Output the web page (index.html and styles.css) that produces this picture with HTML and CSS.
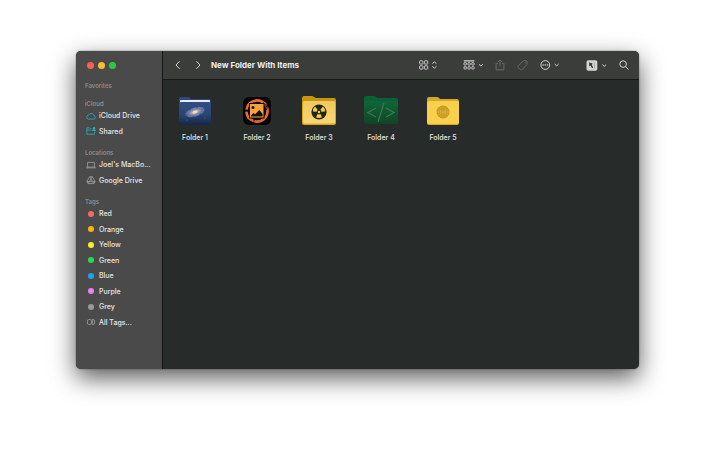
FILE: index.html
```
<!DOCTYPE html>
<html lang="en">
<head>
    <meta charset="UTF-8">
    <meta name="viewport" content="width=device-width, initial-scale=1.0">
    <title>New Folder With Items</title>
    <link rel="stylesheet" href="styles.css">
</head>
<body>
    <div class="window">
        <nav class="sidebar">
            <div class="lights">
                <button class="light close" aria-label="Close"></button>
                <button class="light minimise" aria-label="Minimise"></button>
                <button class="light zoom" aria-label="Zoom"></button>
            </div>

            <section class="section">
                <h2>Favorites</h2>
            </section>

            <section class="section">
                <h2>iCloud</h2>
                <ul class="places">
                    <li><a href="#">
                        <svg class="icon cyan" viewBox="0 0 10 10"><path d="M2.8 8.2h4.8a1.9 1.9 0 0 0 .3-3.7A2.7 2.7 0 0 0 2.8 4a2.1 2.1 0 0 0 0 4.2z"/></svg>
                        <span>iCloud Drive</span>
                    </a></li>
                    <li><a href="#">
                        <svg class="icon cyan" viewBox="0 0 10 10"><path d="M5.2 2.6H4.4L3.6 1.8H.9v6.5h7.5V5.6M.9 4h4.5"/><circle class="fill" cx="8" cy="2.2" r="1.2"/><path class="fill" d="M6.1 5.1c0-2 3.8-2 3.8 0z"/></svg>
                        <span>Shared</span>
                    </a></li>
                </ul>
            </section>

            <section class="section">
                <h2>Locations</h2>
                <ul class="places">
                    <li><a href="#">
                        <svg class="icon" viewBox="0 0 10 10"><path d="M1.6 7V2.4h6.8V7M.2 7.9h9.6M.6 7.1h8.8"/></svg>
                        <span>Joel's MacBo...</span>
                    </a></li>
                    <li><a href="#">
                        <svg class="icon" viewBox="0 0 10 10"><path d="M3.7 1.7h2.6l2.9 4.8-1.3 2.1H2.1L.8 6.5z"/><path d="M5 4 3.4 6.6h3.2zM3.7 1.7l1.3 2.3M.8 6.5h2.6M7.9 8.6 6.6 6.6M6.3 1.7 5 4M9.2 6.5H6.6M2.1 8.6l1.3-2"/></svg>
                        <span>Google Drive</span>
                    </a></li>
                </ul>
            </section>

            <section class="section">
                <h2>Tags</h2>
                <ul class="places tags">
                    <li><a href="#"><i class="dot red"></i><span>Red</span></a></li>
                    <li><a href="#"><i class="dot orange"></i><span>Orange</span></a></li>
                    <li><a href="#"><i class="dot yellow"></i><span>Yellow</span></a></li>
                    <li><a href="#"><i class="dot green"></i><span>Green</span></a></li>
                    <li><a href="#"><i class="dot blue"></i><span>Blue</span></a></li>
                    <li><a href="#"><i class="dot purple"></i><span>Purple</span></a></li>
                    <li><a href="#"><i class="dot grey"></i><span>Grey</span></a></li>
                    <li><a href="#">
                        <svg class="icon" viewBox="0 0 10 10"><rect x="1.4" y="2.6" width="4.2" height="4.8" rx="1.4"/><path d="M5.8 2.6h1.4q1.4 0 1.4 1.4v2q0 1.4-1.4 1.4H5.8M6.6 3.4v3.2"/></svg>
                        <span>All Tags...</span>
                    </a></li>
                </ul>
            </section>
        </nav>

        <main class="main">
            <header class="toolbar">
                <div class="history">
                    <button aria-label="Back"><svg width="8" height="10" viewBox="0 0 8 10"><path d="M5.6 1.2 2 5l3.6 3.8"/></svg></button>
                    <button aria-label="Forward"><svg width="8" height="10" viewBox="0 0 8 10"><path d="M2.4 1.2 6 5 2.4 8.8"/></svg></button>
                </div>
                <h1>New Folder With Items</h1>

                <div class="tools">
                    <button aria-label="View">
                        <svg width="18" height="10" viewBox="0 0 18 10"><g stroke-width=".9"><rect x=".6" y=".8" width="3.3" height="3.3" rx=".5"/><rect x="5.4" y=".8" width="3.3" height="3.3" rx=".5"/><rect x=".6" y="5.8" width="3.3" height="3.3" rx=".5"/><rect x="5.4" y="5.8" width="3.3" height="3.3" rx=".5"/></g><path d="M13.4 3.6 15.4 1.8l2 1.8M13.4 6.4l2 1.8 2-1.8"/></svg>
                    </button>
                </div>
                <div class="tools">
                    <button aria-label="Group">
                        <svg width="20" height="10" viewBox="0 0 20 10"><path d="M.8 .8h10.6" stroke-width="1.2"/><g stroke-width=".9"><rect x="1" y="2.7" width="2.3" height="2.3" rx=".4"/><rect x="4.9" y="2.7" width="2.3" height="2.3" rx=".4"/><rect x="8.8" y="2.7" width="2.3" height="2.3" rx=".4"/><rect x="1" y="6.7" width="2.3" height="2.3" rx=".4"/><rect x="4.9" y="6.7" width="2.3" height="2.3" rx=".4"/><rect x="8.8" y="6.7" width="2.3" height="2.3" rx=".4"/></g><path d="m16 4.3 1.9 1.8 1.9-1.8"/></svg>
                    </button>
                    <button class="dim" aria-label="Share" disabled>
                        <svg width="10" height="12" viewBox="0 0 10 12"><path d="M3.2 4.4H1.1v6.4h7.8V4.4H6.8M5 7.6V1M3 2.9 5 1l2 1.9"/></svg>
                    </button>
                    <button class="dim" aria-label="Tags" disabled>
                        <svg width="11" height="12" viewBox="0 0 11 12"><path d="m1.1 7.2 5-5.2q.4-.4 1-.4l2.6.2q.5.1.5.6l-.2 2.8q0 .5-.4.9l-4.7 4.6q-.6.5-1.2 0L1.1 8.5q-.5-.6 0-1.3z"/><circle cx="8.1" cy="3.8" r=".3"/></svg>
                    </button>
                    <button aria-label="More">
                        <svg width="20" height="10" viewBox="0 0 20 10"><circle cx="5.3" cy="5" r="4.4"/><g class="fill"><circle cx="3.1" cy="5" r=".8"/><circle cx="5.3" cy="5" r=".8"/><circle cx="7.5" cy="5" r=".8"/></g><path d="m14.8 4.1 1.9 1.8 1.9-1.8"/></svg>
                    </button>
                </div>
                <div class="tools">
                    <button aria-label="Action">
                        <svg width="21" height="11" viewBox="0 0 21 11"><rect class="fill" x=".5" y=".2" width="10.8" height="10.6" rx="1.8"/><path class="dark" d="m3.2 2.3 3.6 1.5-1.1.9 1.5 2.9-1.1.6-1.6-2.8-1.3.9z"/><path class="dark" d="M8.3 2.4h.7v6.2h-.7z" opacity=".35"/><path d="m16.3 4.6 1.9 1.8L20.1 4.6"/></svg>
                    </button>
                    <button aria-label="Search">
                        <svg width="10" height="10" viewBox="0 0 10 10"><circle cx="4.1" cy="4.1" r="3.3"/><path d="m6.5 6.5 3 3"/></svg>
                    </button>
                </div>
            </header>

            <div class="files">
                <figure class="file">
                    <svg width="34" height="32" viewBox="0 0 34 32">
                        <defs>
                            <linearGradient id="sky" x1="0" y1="0" x2="0" y2="1"><stop offset="0" stop-color="#304d7e"/><stop offset=".5" stop-color="#2c4673"/><stop offset="1" stop-color="#172848"/></linearGradient>
                            <radialGradient id="galaxy"><stop offset="0" stop-color="#fff0df"/><stop offset=".25" stop-color="#c5a6a8"/><stop offset=".6" stop-color="#7186b0" stop-opacity=".75"/><stop offset="1" stop-color="#3c5f99" stop-opacity="0"/></radialGradient>
                        </defs>
                        <path fill="#2b4a84" d="M1 4q0-2 2-2h7q1 0 2 1l1 1h18q2 0 2 2v5H1z"/>
                        <rect x="2" y="5" width="30" height="6" rx="1" fill="#e6edf7"/>
                        <rect x="1" y="7" width="32" height="23" rx="1.5" fill="url(#sky)"/>
                        <g transform="rotate(-17 17 17)"><ellipse cx="17" cy="17" rx="12" ry="5.5" fill="url(#galaxy)"/><ellipse cx="17" cy="17" rx="9" ry="3.6" fill="none" stroke="#9bacd0" stroke-width=".7" stroke-dasharray="5 2" opacity=".55"/><ellipse cx="17" cy="17" rx="2.4" ry="1.2" fill="#f5dbc7"/></g>
                        <g fill="#8fa9d3" opacity=".6"><circle cx="6" cy="12" r=".4"/><circle cx="27" cy="23" r=".5"/><circle cx="9" cy="25" r=".5"/><circle cx="30" cy="11" r=".4"/></g>
                    </svg>
                    <figcaption>Folder 1</figcaption>
                </figure>
                <figure class="file">
                    <svg width="34" height="32" viewBox="0 0 34 32">
                        <rect x="3" y="2" width="28" height="28" rx="6" fill="#050404"/>
                        <circle cx="17" cy="16" r="10.6" fill="none" stroke="#ed6a36" stroke-width="2.6" stroke-dasharray="19 1.5 12 2 22 1"/>
                        <path d="M24 7q5 5 3.5 12M11 25q7 4 13-1" fill="none" stroke="#e75f32" stroke-width="1.4"/>
                        <path d="M24.5 10h3l-1 5M24 13l3-2" fill="none" stroke="#050404" stroke-width="1"/>
                        <rect x="9.5" y="8.5" width="14.5" height="14.5" fill="#f4a43b" stroke="#050404"/>
                        <circle cx="13" cy="12.4" r="1.5" fill="#15100a"/>
                        <path d="m11 20.6 2.4-2.6 1.8 1.3 4-4.3 3.3 3.7v2.8H11z" fill="#15100a"/>
                    </svg>
                    <figcaption>Folder 2</figcaption>
                </figure>
                <figure class="file">
                    <svg width="34" height="32" viewBox="0 0 34 32">
                        <defs><linearGradient id="gold" x1="0" y1="0" x2="0" y2="1"><stop offset="0" stop-color="#f0c860"/><stop offset="1" stop-color="#f9d673"/></linearGradient></defs>
                        <path fill="#c5960e" d="M0 3q0-2 2-2h8q1 0 2 1l2 1h18q2 0 2 2v6H0z"/>
                        <rect y="6" width="34" height="24" rx="2" fill="#d9a512"/>
                        <rect x="1" y="6" width="32" height="22.5" rx="1.5" fill="url(#gold)"/>
                        <circle cx="17" cy="17" r="7.6" fill="#242519"/>
                        <g fill="#f5ce3d"><path d="M15.6 14.8 13 11.6A6 6 0 0 0 11 16.4l3.7.4q.1-1.3.9-2z"/><path d="M18.4 14.8l2.6-3.2a6 6 0 0 1 2 4.8l-3.7.4q-.1-1.3-.9-2z"/><path d="M15.6 19q1.4.8 2.8 0l1.6 3.2q-3 1.4-6 0z"/><circle cx="17" cy="17" r="1.2"/></g>
                    </svg>
                    <figcaption>Folder 3</figcaption>
                </figure>
                <figure class="file">
                    <svg width="34" height="32" viewBox="0 0 34 32">
                        <defs><linearGradient id="forest" x1="0" y1="0" x2="0" y2="1"><stop offset="0" stop-color="#10663a"/><stop offset="1" stop-color="#114424"/></linearGradient></defs>
                        <path fill="#0a6234" d="M0 3q0-2 2-2h8q1 0 2 1l2 1h18q2 0 2 2v6H0z"/>
                        <rect y="6" width="34" height="23" rx="2" fill="url(#forest)"/>
                        <path d="m12 13-8 4.5 8 4.5m10-9 8 4.5-8 4.5M20 8l-6 19" fill="none" stroke="#3a7a4e" stroke-width="1.2"/>
                    </svg>
                    <figcaption>Folder 4</figcaption>
                </figure>
                <figure class="file">
                    <svg width="34" height="32" viewBox="0 0 34 32">
                        <path fill="#d5a72a" d="M1 4q0-2 2-2h8q1 0 2 1l1 1h17q2 0 2 2v5H1z"/>
                        <rect x="1" y="6" width="32" height="24" rx="2" fill="#dba92a"/>
                        <rect x="1" y="6" width="32" height="23" rx="2" fill="#f8d04c"/>
                        <circle cx="17" cy="17" r="6.5" fill="#c49a23"/>
                        <path d="M17 11v12M14.7 12v10M19.3 12v10M12.4 15v5M21.6 15v5M11 17h12M12.5 14l9 6M21.5 14l-9 6" stroke="#dfb43a" stroke-width=".6" fill="none"/>
                    </svg>
                    <figcaption>Folder 5</figcaption>
                </figure>
            </div>
        </main>
    </div>
</body>
</html>
```

FILE: styles.css
```
* {
    box-sizing: border-box;
}

body {
    display: flex;
    min-height: 100vh;
    margin: 0;
    padding: 51px 81px 83px 76px;
    background-color: #fff;
    font-family: Inter, "Liberation Sans", sans-serif;
    font-size: 7px;
    color: #e6e6e6;
}

h1, h2, ul, figure {
    margin: 0;
    padding: 0;
}

button {
    display: flex;
    padding: 0;
    border: none;
    background: none;
    color: inherit;
}

svg {
    display: block;
    flex: none;
    fill: none;
    stroke: currentColor;
}

.fill {
    fill: currentColor;
    stroke: none;
}

.window {
    display: flex;
    flex: 1;
    border-radius: 5px;
    overflow: hidden;
    background-color: #272b2a;
    box-shadow: 0 9px 24px rgba(0, 0, 0, 0.65), 0 0 2px rgba(0, 0, 0, 0.4);
}

/* Sidebar */
.sidebar {
    display: flex;
    flex-direction: column;
    gap: 10px;
    width: 87px;
    padding: 11px 9px;
    border-right: 1px solid #151716;
    background-color: #4a4a4a;
}

.lights {
    display: flex;
    gap: 4px;
    padding: 0 2px 3px;
}

.light {
    width: 7px;
    height: 7px;
    border-radius: 50%;
}

.close { background-color: #fb5e55; }
.minimise { background-color: #f9bb2f; }
.zoom { background-color: #29c941; }

h2 {
    font-size: 6px;
    line-height: 8px;
    font-weight: 600;
    color: #8c8c8c;
}

.places {
    display: grid;
    grid-auto-rows: 1fr;
    height: 31px;
    padding-left: 1px;
    list-style: none;
}

.tags {
    height: 124px;
}

.places li {
    display: flex;
}

.places a {
    display: flex;
    align-items: center;
    gap: 3px;
    color: inherit;
    font-weight: 500;
    text-decoration: none;
    white-space: nowrap;
}

.icon {
    width: 10px;
    height: 10px;
    color: #a0a0a0;
    stroke-width: 0.8;
}

.cyan { color: #1fb5bd; }

.dot {
    flex: none;
    width: 6px;
    height: 6px;
    margin: 0 2px;
    border-radius: 50%;
}

.red { background-color: #f46a65; }
.orange { background-color: #fdb213; }
.yellow { background-color: #faf02b; }
.green { background-color: #24dc4e; }
.blue { background-color: #19a4ef; }
.purple { background-color: #e983f2; }
.grey { background-color: #9a9a9a; }

/* Content */
.main {
    flex: 1;
    min-width: 0;
}

.toolbar {
    display: flex;
    align-items: center;
    height: 29px;
    padding: 0 10px 0 11px;
    border-bottom: 1px solid #171918;
    background-color: #3b3d3b;
    color: #d4d4d4;
}

.history {
    display: flex;
    gap: 12px;
    margin-right: 9px;
}

h1 {
    margin-right: auto;
    font-size: 8px;
    line-height: 12px;
    font-weight: 700;
    color: #f0f0f0;
}

.tools {
    display: flex;
    align-items: center;
    gap: 12px;
    margin-left: 26px;
}

.dim {
    color: #686a68;
}

.dark {
    fill: #333;
    stroke: none;
}

.files {
    display: flex;
    flex-wrap: wrap;
    padding: 15px 1px;
}

.file {
    display: flex;
    flex-direction: column;
    align-items: center;
    gap: 6px;
    width: 62px;
}

.file svg {
    stroke: none;
}

figcaption {
    line-height: 10px;
    font-weight: 500;
}
```
